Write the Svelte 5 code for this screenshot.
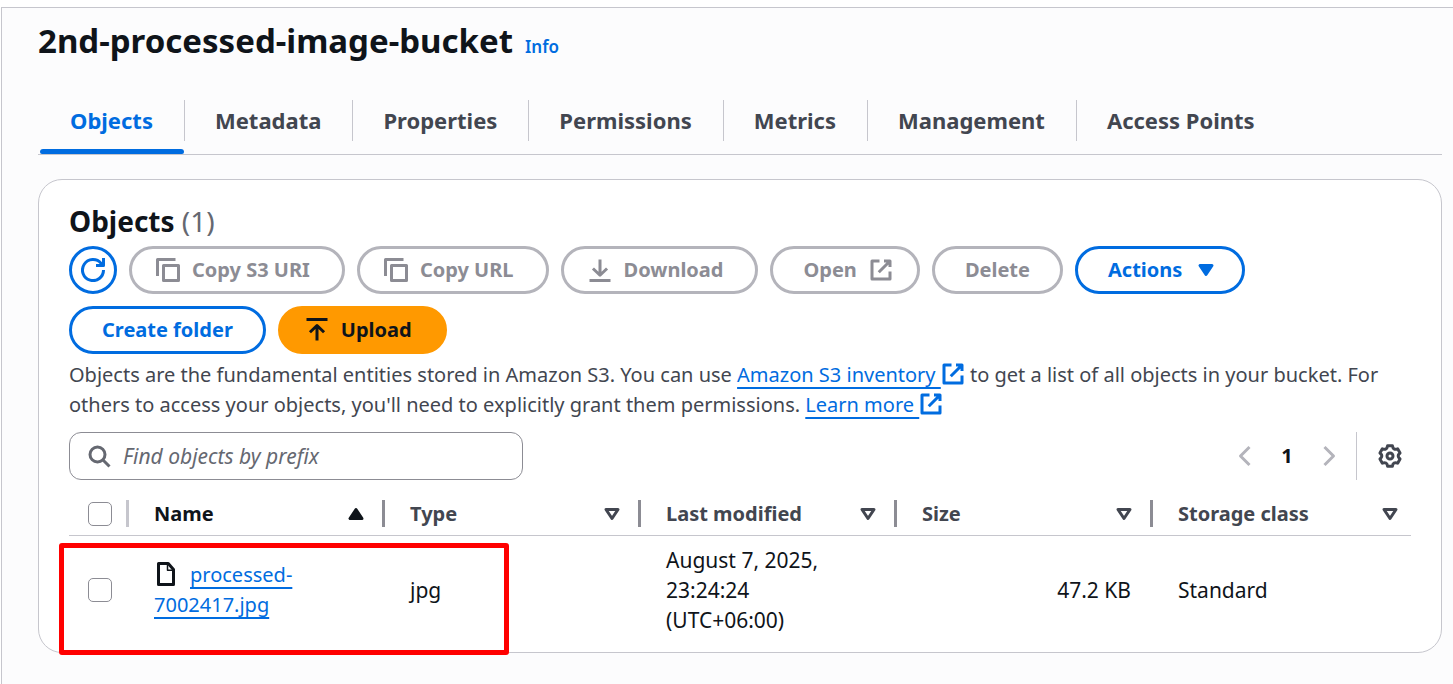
<script>
  const tabs = ['Objects', 'Metadata', 'Properties', 'Permissions', 'Metrics', 'Management', 'Access Points'];
  const columns = [
    { label: 'Name', sorted: true },
    { label: 'Type' },
    { label: 'Last modified' },
    { label: 'Size' },
    { label: 'Storage class' }
  ];
  let active = $state('Objects');
  let query = $state('');
</script>

{#snippet icon(name)}
  <svg class="icon" viewBox="0 0 16 16" aria-hidden="true">
    {#if name === 'refresh'}
      <path d="M15 8a7 7 0 1 1-1.6-4.4L15 5" />
      <path d="M10 5h5V0" />
    {:else if name === 'copy'}
      <path d="M15 5H5v10h10V5Z" />
      <path d="M13 1H1v11" />
    {:else if name === 'download'}
      <path d="M1 15h14M8 1v10.500M3.300 7 8 11.500 12.700 7" />
    {:else if name === 'upload'}
      <path d="M1 1h14M8 15V5M3.300 9.500 8 5l4.700 4.500" />
    {:else if name === 'external'}
      <path d="M10 2h4v4M6.500 9.500 14 2M14 9v5H2V2h5" />
    {:else if name === 'caret'}
      <path class="solid" d="M4 5h8l-4 6-4-6Z" />
    {:else if name === 'sort'}
      <path d="M4 5h8l-4 6-4-6Z" />
    {:else if name === 'sorted'}
      <path class="solid" d="M4 11h8L8 5l-4 6Z" />
    {:else if name === 'search'}
      <circle cx="7" cy="7" r="5" />
      <path d="m10.500 10.500 4.500 4.500" />
    {:else if name === 'prev'}
      <path d="m11 2-6 6 6 6" />
    {:else if name === 'next'}
      <path d="m5 2 6 6-6 6" />
    {:else if name === 'file'}
      <path d="M9.500 1H3v14h10V5L9.500 1Z" />
      <path class="fold" d="M9 1v4.500h4" />
    {:else if name === 'settings'}
      <path d="M6.400 1.200H9.600Q10.100 4.400 13.100 3.200L14.700 6Q12.200 8 14.700 10L13.100 12.800Q10.100 11.600 9.600 14.800H6.400Q5.900 11.600 2.900 12.800L1.300 10Q3.800 8 1.300 6L2.900 3.200Q5.900 4.400 6.400 1.200Z" />
      <circle cx="8" cy="8" r="2" />
    {/if}
  </svg>
{/snippet}

<div class="page">
  <main>
    <header>
      <h1>2nd-processed-image-bucket</h1>
      <a class="info" href="#info">Info</a>
    </header>

    <div class="tabs" role="tablist">
      {#each tabs as tab}
        <div class="tab">
          <button role="tab" aria-selected={active === tab} class:active={active === tab} onclick={() => (active = tab)}>{tab}</button>
        </div>
      {/each}
    </div>

    <section class="card">
      <h2>Objects <span>(1)</span></h2>
      <div class="actions">
        <button class="btn round" aria-label="Refresh">{@render icon('refresh')}</button>
        <button class="btn lead" disabled>{@render icon('copy')}Copy S3 URI</button>
        <button class="btn lead" disabled>{@render icon('copy')}Copy URL</button>
        <button class="btn lead" disabled>{@render icon('download')}Download</button>
        <button class="btn trail" disabled>Open{@render icon('external')}</button>
        <button class="btn" disabled>Delete</button>
        <button class="btn trail">Actions{@render icon('caret')}</button>
        <button class="btn">Create folder</button>
        <button class="btn lead primary">{@render icon('upload')}Upload</button>
      </div>
      <p class="description">
        Objects are the fundamental entities stored in Amazon S3. You can use
        <a href="#inventory"><span>Amazon S3 inventory&nbsp;</span>{@render icon('external')}</a>
        to get a list of all objects in your bucket. For others to access your objects, you'll need to explicitly grant them permissions.
        <a href="#learn"><span>Learn more&nbsp;</span>{@render icon('external')}</a>
      </p>

      <div class="tools">
        <label class="search">
          {@render icon('search')}
          <input type="search" placeholder="Find objects by prefix" aria-label="Find objects by prefix" bind:value={query} />
        </label>
        <div class="pager">
          <button aria-label="Previous page" disabled>{@render icon('prev')}</button>
          <button class="current" aria-current="page">1</button>
          <button aria-label="Next page" disabled>{@render icon('next')}</button>
          <div class="prefs"><button aria-label="Preferences">{@render icon('settings')}</button></div>
        </div>
      </div>

      <div class="table-area">
        <table>
          <colgroup>
            <col class="col-check" /><col class="col" /><col class="col" /><col class="col" /><col class="col" /><col />
          </colgroup>
          <thead>
            <tr>
              <th class="check"><div class="head"><input type="checkbox" aria-label="Select all objects" /></div></th>
              {#each columns as column}
                <th class:sorted={column.sorted}>
                  <div class="head">{column.label}{@render icon(column.sorted ? 'sorted' : 'sort')}</div>
                </th>
              {/each}
            </tr>
          </thead>
          <tbody>
            <tr>
              <td class="check"><input type="checkbox" aria-label="Select processed-7002417.jpg" /></td>
              <td class="name">{@render icon('file')}<a href="#object">processed-7002417.jpg</a></td>
              <td>jpg</td>
              <td>August 7, 2025, 23:24:24 (UTC+06:00)</td>
              <td class="size">47.2 KB</td>
              <td>Standard</td>
            </tr>
          </tbody>
        </table>
        <div class="highlight"></div>
      </div>
    </section>
  </main>
</div>

<style>
  :global(body) {
    background: #fff;
  }
  .page {
    box-sizing: border-box;
    min-height: 100vh;
    padding: 7px 0 0 1px;
    color: #0f141a;
    font: 20px/30px "Noto Sans", "Open Sans", sans-serif;
  }
  main {
    box-sizing: border-box;
    min-height: calc(100vh - 7px);
    padding: 11px 11px 20px 36px;
    border-top: 1px solid #c6c6cd;
    border-left: 1px solid #c6c6cd;
    background: #fcfcfd;
  }
  button,
  input {
    font: inherit;
    color: inherit;
  }
  button {
    padding: 0;
    border: 0;
    background: none;
  }
  a {
    color: #006ce0;
  }
  .icon {
    flex: none;
    width: 24px;
    height: 24px;
    fill: none;
    stroke: currentColor;
    stroke-width: 2;
    stroke-linejoin: round;
  }
  .solid {
    fill: currentColor;
  }
  .fold {
    stroke-width: 1;
  }
  header {
    display: flex;
    align-items: baseline;
    gap: 12px;
  }
  h1,
  h2,
  p {
    margin: 0;
  }
  h1 {
    font-size: 33px;
    line-height: 44px;
    font-weight: 700;
  }
  .info {
    font-size: 17px;
    font-weight: 600;
    text-decoration: none;
  }
  .tabs {
    display: flex;
    margin-top: 25px;
    border-bottom: 1px solid #c6c6cd;
  }
  .tab {
    display: flex;
    padding-bottom: 1px;
  }
  .tab button {
    position: relative;
    padding: 17px 31px 18px 30px;
    color: #424650;
    font-size: 22px;
    font-weight: 700;
  }
  .tab:first-child {
    padding-left: 2px;
  }
  .tab button.active {
    color: #006ce0;
  }
  .tab button.active::before {
    content: "";
    position: absolute;
    left: 0;
    right: 0;
    bottom: -1px;
    height: 5px;
    border-radius: 3px 3px 2px 2px;
    background: #006ce0;
  }
  .tab:not(:last-child)::after {
    content: "";
    width: 1px;
    margin: 12px 0;
    background: #c6c6cd;
  }
  .card {
    margin-top: 24px;
    padding: 23px 30px 8px;
    border: 1px solid #c6c6cd;
    border-radius: 24px;
    background: #fff;
  }
  h2 {
    font-size: 28px;
    line-height: 36px;
    font-weight: 700;
  }
  h2 span {
    color: #656871;
    font-weight: 400;
  }
  .actions {
    display: flex;
    flex-wrap: wrap;
    gap: 12px;
    margin-top: 7px;
  }
  .btn {
    display: inline-flex;
    align-items: center;
    justify-content: center;
    gap: 12px;
    box-sizing: border-box;
    height: 48px;
    padding: 0 30px;
    border: 3px solid #006ce0;
    border-radius: 24px;
    color: #006ce0;
    font-weight: 700;
  }
  .lead {
    padding: 0 32px 0 24px;
  }
  .trail {
    padding-right: 24px;
  }
  .round {
    width: 48px;
    padding: 0;
  }
  .btn:disabled {
    border-color: #b4b4bb;
    color: #8c8c94;
  }
  .primary {
    border-color: #ff9900;
    background: #ff9900;
    color: #0f141a;
  }
  .description {
    margin-top: 6px;
    color: #424650;
  }
  .description a {
    text-decoration: none;
    white-space: nowrap;
  }
  .description a span,
  .name a {
    text-decoration: underline;
    text-decoration-thickness: 2px;
    text-underline-offset: 5px;
    text-decoration-skip-ink: none;
  }
  .description .icon {
    vertical-align: -4px;
  }
  .tools {
    display: flex;
    justify-content: space-between;
    margin-top: 12px;
  }
  .search {
    display: flex;
    align-items: center;
    gap: 12px;
    box-sizing: border-box;
    width: 454px;
    height: 48px;
    padding: 0 17px;
    border: 1px solid #8c8c94;
    border-radius: 12px;
    color: #656871;
  }
  .search input {
    flex: 1;
    min-width: 0;
    padding: 0;
    border: 0;
    outline: 0;
    background: none;
    font-size: 21px;
  }
  .search input::placeholder {
    color: #656871;
    font-style: italic;
    opacity: 1;
  }
  .pager {
    display: flex;
    align-items: center;
  }
  .pager button {
    display: flex;
    justify-content: center;
    min-width: 42px;
  }
  .pager button:disabled {
    color: #b4b4bb;
  }
  .pager .current {
    font-weight: 700;
  }
  .prefs {
    display: flex;
    align-items: center;
    height: 48px;
    margin-left: 6px;
    padding-left: 12px;
    border-left: 1px solid #c6c6cd;
    color: #424650;
  }
  .table-area {
    position: relative;
    margin-top: 12px;
  }
  table {
    width: 100%;
    table-layout: fixed;
    border-collapse: collapse;
  }
  .col-check {
    width: 60px;
  }
  .col {
    width: 256px;
  }
  th,
  td {
    padding: 0 40px 0 25px;
    text-align: left;
  }
  th {
    height: 43px;
    padding: 0;
    border-bottom: 1px solid #c6c6cd;
    color: #424650;
    font-weight: 700;
  }
  .head {
    display: flex;
    align-items: center;
    justify-content: space-between;
    box-sizing: border-box;
    height: 27px;
    padding: 0 14px 0 25px;
    border-right: 3px solid #8c8c94;
  }
  th:last-child .head {
    padding-right: 9px;
    border-right: 0;
  }
  .sorted {
    color: #0f141a;
  }
  .check .head {
    padding: 0 0 0 19px;
    border-color: #c6c6cd;
  }
  td {
    height: 108px;
    font-size: 21px;
  }
  td.check {
    padding: 0 0 0 19px;
  }
  .check input {
    appearance: none;
    display: block;
    box-sizing: border-box;
    width: 24px;
    height: 24px;
    margin: 0;
    border: 1px solid #8c8c94;
    border-radius: 5px;
    background: #fff;
  }
  .check input:checked {
    background: #006ce0;
  }
  .name {
    font-size: 20px;
  }
  .name .icon {
    margin-right: 12px;
    vertical-align: -4px;
  }
  .size {
    padding-right: 22px;
    text-align: right;
  }
  /* Callout frame around the processed file */
  .highlight {
    position: absolute;
    left: -10px;
    top: 51px;
    box-sizing: border-box;
    width: 450px;
    height: 112px;
    border: 5px solid #f00;
    border-radius: 3px;
    pointer-events: none;
  }
</style>
